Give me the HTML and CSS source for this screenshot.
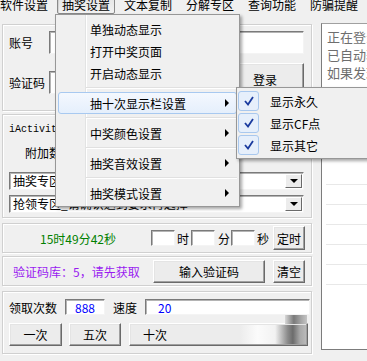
FILE: index.html
```html
<!DOCTYPE html>
<html lang="zh-CN">
<head>
  <meta charset="UTF-8">
  <title>抽奖助手</title>
  <link rel="stylesheet" href="styles.css">
</head>
<body>
  <div class="window">
    <div class="menubar">
      <span class="menu-item">软件设置</span>
      <span class="menu-item active">抽奖设置</span>
      <span class="menu-item">文本复制</span>
      <span class="menu-item">分解专区</span>
      <span class="menu-item">查询功能</span>
      <span class="menu-item">防骗提醒</span>
    </div>

    <div class="main">
      <div class="left">
        <div class="group g-login">
          <div class="row">
            <label class="lbl">账号</label>
            <input type="text" class="field f-account">
          </div>
          <div class="row row-code">
            <label class="lbl">验证码</label>
            <input type="text" class="field f-code">
            <button class="btn btn-login">登录</button>
          </div>
        </div>

        <div class="group g-activity">
          <div class="mono">iActivityId</div>
          <div class="extra">附加数据</div>
          <div class="combo"><span class="combo-text">抽奖专区_请选择活动</span><span class="combo-btn"></span></div>
          <div class="combo combo-2"><span class="combo-text">抢领专区_请确认达到要求再选择</span><span class="combo-btn"></span></div>
        </div>

        <div class="group g-timer">
          <span class="clock">15时49分42秒</span>
          <input type="text" class="field f-time">
          <span class="unit">时</span>
          <input type="text" class="field f-time">
          <span class="unit u-min">分</span>
          <input type="text" class="field f-time">
          <span class="unit u-sec">秒</span>
          <button class="btn btn-small">定时</button>
        </div>

        <div class="group g-captcha">
          <span class="captcha-info">验证码库：5，请先获取</span>
          <button class="btn btn-input">输入验证码</button>
          <button class="btn btn-small">清空</button>
        </div>

        <div class="group g-draw">
          <div class="row">
            <span class="lbl-count">领取次数</span>
            <input type="text" class="field f-count" value="888">
            <span class="lbl-speed">速度</span>
            <input type="text" class="field f-speed" value="20">
          </div>
          <div class="row row-buttons">
            <button class="btn btn-once">一次</button>
            <button class="btn btn-five">五次</button>
            <button class="btn btn-ten">十次</button>
          </div>
        </div>
      </div>

      <div class="log">
        <div class="log-text">正在登录，请稍候...</div>
        <div class="log-text">已自动获取验证码</div>
        <div class="log-text">如果发现异常请重试</div>
        <div class="log-lines">
          <div class="log-line"></div>
          <div class="log-line"></div>
          <div class="log-line"></div>
          <div class="log-line"></div>
          <div class="log-line"></div>
          <div class="log-line"></div>
        </div>
      </div>
    </div>

    <!-- 抽奖设置 dropdown -->
    <div class="popup">
      <div class="popup-item">单独动态显示</div>
      <div class="popup-item">打开中奖页面</div>
      <div class="popup-item">开启动态显示</div>
      <div class="sep"></div>
      <div class="popup-item hot">抽十次显示栏设置<span class="arrow"></span></div>
      <div class="sep"></div>
      <div class="popup-item">中奖颜色设置<span class="arrow"></span></div>
      <div class="sep"></div>
      <div class="popup-item">抽奖音效设置<span class="arrow"></span></div>
      <div class="sep"></div>
      <div class="popup-item">抽奖模式设置<span class="arrow"></span></div>
    </div>

    <div class="submenu">
      <div class="sub-item">
        <span class="check"><svg width="10" height="10" viewBox="0 0 10 10"><polyline points="1,5 4,8.5 9,1" fill="none" stroke="#1a3a9e" stroke-width="1.8"/></svg></span>
        <span class="sub-text">显示永久</span>
      </div>
      <div class="sub-item">
        <span class="check"><svg width="10" height="10" viewBox="0 0 10 10"><polyline points="1,5 4,8.5 9,1" fill="none" stroke="#1a3a9e" stroke-width="1.8"/></svg></span>
        <span class="sub-text">显示CF点</span>
      </div>
      <div class="sub-item">
        <span class="check"><svg width="10" height="10" viewBox="0 0 10 10"><polyline points="1,5 4,8.5 9,1" fill="none" stroke="#1a3a9e" stroke-width="1.8"/></svg></span>
        <span class="sub-text">显示其它</span>
      </div>
    </div>
  </div>
</body>
</html>
```

FILE: styles.css
```css
* {
  box-sizing: border-box;
}
body {
  margin: 0;
  width: 367px;
  height: 361px;
  overflow: hidden;
  background-color: #f0f0f0;
  color: #000;
  font-family: "Noto Sans CJK SC", "Noto Sans", sans-serif;
  font-size: 12px;
}
.window {
  position: relative;
  height: 361px;
  overflow: hidden;
}

/* menu bar */
.menubar {
  display: flex;
  gap: 4px;
  height: 19px;
  margin: -5px 0 0 -5px;
}
.menu-item {
  width: 58px;
  height: 19px;
  line-height: 17px;
  text-align: center;
  white-space: nowrap;
  border: 1px solid transparent;
  border-radius: 2px;
}
.menu-item.active {
  border-color: #8a8a8a;
  background: linear-gradient(#e4e4e4, #f2f2f2);
  box-shadow: inset 1px 1px 1px rgba(0, 0, 0, 0.12);
}

/* layout */
.main {
  display: flex;
  padding-top: 9px;
}
.left {
  width: 310px;
  margin: 1px 0 0 2px;
  display: flex;
  flex-direction: column;
  flex-shrink: 0;
}
.group {
  border: 1px solid #d0d0d0;
  box-shadow: inset 1px 1px #fff, 1px 1px #fff;
}
.row {
  display: flex;
  align-items: center;
}

/* common controls */
.field {
  font: inherit;
  padding: 0;
  margin: 0;
  outline: none;
  background: #fff;
  border: 1px solid;
  border-color: #7a7a7a #f4f4f4 #f4f4f4 #7a7a7a;
  box-shadow: inset 1px 1px #b4b4b4;
}
.btn {
  font: inherit;
  color: #000;
  padding: 0;
  margin: 0;
  background: #ececec;
  border: 1px solid;
  border-color: #fff #6a6a6a #6a6a6a #fff;
  box-shadow: inset -1px -1px #a0a0a0, inset 1px 1px #e4e4e4;
}

/* group: login */
.g-login {
  height: 87px;
  padding: 6px 0 0 6px;
}
.g-login .row {
  height: 23px;
}
.lbl {
  width: 40px;
  line-height: 23px;
}
.f-account {
  width: 255px;
  height: 23px;
}
.row-code {
  margin-top: 8px;
  align-items: flex-end;
}
.g-login .row-code {
  height: 33px;
}
.row-code .lbl {
  margin-bottom: 1px;
}
.f-code {
  width: 175px;
  height: 23px;
  margin: 0 2px 1px 0;
}
.btn-login {
  width: 78px;
  height: 32px;
}

/* group: activity */
.g-activity {
  height: 104px;
  margin-top: 3px;
  padding: 8px 0 0 6px;
}
.mono {
  height: 14px;
  line-height: 14px;
  font-family: "Liberation Mono", monospace;
  font-size: 10px;
}
.extra {
  height: 20px;
  line-height: 20px;
  margin-top: 6px;
  padding-left: 16px;
}
.combo {
  display: flex;
  align-items: center;
  width: 295px;
  height: 18px;
  margin-top: 9px;
  padding: 0 1px 0 3px;
  background: #fff;
  border: 1px solid;
  border-color: #7a7a7a #f4f4f4 #f4f4f4 #7a7a7a;
  box-shadow: inset 1px 1px #b4b4b4;
  white-space: nowrap;
}
.combo-2 {
  margin-top: 5px;
}
.combo-text {
  flex: 1;
  overflow: hidden;
  line-height: 16px;
}
.combo-btn {
  width: 17px;
  height: 14px;
  flex-shrink: 0;
  display: flex;
  align-items: center;
  justify-content: center;
  background: #ececec;
  border: 1px solid;
  border-color: #fff #6a6a6a #6a6a6a #fff;
}
.combo-btn::after {
  content: "";
  border-left: 4px solid transparent;
  border-right: 4px solid transparent;
  border-top: 4px solid #000;
}

/* group: timer */
.g-timer {
  display: flex;
  align-items: center;
  height: 30px;
  margin-top: 5px;
  padding-left: 37px;
}
.clock {
  width: 111px;
  color: #008000;
}
.f-time {
  width: 24px;
  height: 16px;
}
.unit {
  width: 16px;
  padding-left: 2px;
}
.u-min {
  padding-left: 3px;
}
.u-sec {
  width: 18px;
}
.btn-small {
  width: 32px;
  height: 24px;
}

/* group: captcha */
.g-captcha {
  display: flex;
  align-items: center;
  height: 30px;
  margin-top: 3px;
  padding-left: 10px;
}
.captcha-info {
  width: 140px;
  color: #9a1cf0;
  white-space: nowrap;
}
.btn-input {
  width: 112px;
  height: 23px;
  margin-right: 8px;
}
.g-captcha .btn-small {
  height: 23px;
}

/* group: draw */
.g-draw {
  height: 63px;
  margin-top: 5px;
  padding: 7px 0 0 6px;
}
.g-draw .row {
  height: 16px;
}
.lbl-count {
  width: 56px;
}
.f-count {
  width: 40px;
  height: 16px;
  color: #0000ff;
  text-align: center;
}
.lbl-speed {
  width: 40px;
  padding-left: 8px;
}
.f-speed {
  width: 165px;
  height: 16px;
  color: #0000ff;
  padding-left: 12px;
}
.g-draw .row-buttons {
  height: 23px;
  margin-top: 8px;
}
.row-buttons .btn {
  height: 23px;
}
.btn-once {
  width: 53px;
}
.btn-five {
  width: 52px;
  margin-left: 7px;
}
.btn-ten {
  position: relative;
  width: 179px;
  margin-left: 8px;
  padding-left: 13px;
  text-align: left;
  background: linear-gradient(to right, #ececec 0, #ececec 62%, #fbfbfb 72%, #f2f2f2 82%, #8c8c8c 89%, #6c6c6c 92%, #a8a8a8 96%, #bcbcbc 100%);
}
.btn-ten::before {
  content: "";
  position: absolute;
  right: 0;
  top: -9px;
  width: 22px;
  height: 9px;
  background: linear-gradient(to right, #d8d8d8, #7a7a7a 40%, #a8a8a8 75%, #c4c4c4);
}

/* log panel */
.log {
  width: 70px;
  height: 327px;
  margin-left: 9px;
  flex-shrink: 0;
  padding: 4px 0 0 5px;
  background: #fff;
  border: 1px solid #7c7c7c;
  border-top-color: #a0a0a0;
  overflow: hidden;
}
.log-text {
  height: 18px;
  line-height: 18px;
  font-size: 13px;
  color: #6e6e6e;
  white-space: nowrap;
}
.log-lines {
  margin: 83px 0 0 -1px;
}
.log-line {
  height: 20px;
  border-bottom: 1px solid #e8e8e8;
}

/* dropdown menu */
.popup {
  position: absolute;
  left: 55px;
  top: 14px;
  width: 185px;
  height: 193px;
  padding: 3px 0 2px;
  border: 1px solid #979797;
  background-color: #f0f0f0;
  background-image: linear-gradient(to right, transparent 29px, #e2e3e3 29px, #e2e3e3 30px, #fff 30px, #fff 31px, transparent 31px);
  box-shadow: 2px 2px 3px rgba(0, 0, 0, 0.35);
}
.popup-item {
  display: flex;
  align-items: center;
  justify-content: space-between;
  height: 22px;
  margin: 0 2px;
  padding: 0 7px 0 31px;
  border: 1px solid transparent;
  border-radius: 3px;
  white-space: nowrap;
}
.popup-item.hot {
  border-color: #a8c9f0;
  background: linear-gradient(#f4f8fe, #e5effc);
}
.arrow {
  width: 0;
  height: 0;
  border-top: 4px solid transparent;
  border-bottom: 4px solid transparent;
  border-left: 4px solid #000;
}
.sep {
  height: 8px;
  margin: 0 2px 0 30px;
  background: linear-gradient(transparent 3px, #e0e0e0 3px, #e0e0e0 4px, #fff 4px, #fff 5px, transparent 5px);
}

.submenu {
  position: absolute;
  left: 236px;
  top: 87px;
  width: 140px;
  height: 72px;
  padding: 2px 0;
  border: 1px solid #979797;
  background: #f0f0f0;
  box-shadow: 2px 2px 3px rgba(0, 0, 0, 0.35);
}
.sub-item {
  display: flex;
  align-items: center;
  height: 22px;
  padding-left: 1px;
}
.check {
  display: flex;
  align-items: center;
  justify-content: center;
  width: 21px;
  height: 20px;
  border: 1px solid #a9c8ee;
  border-radius: 3px;
  background: #e6effb;
}
.sub-text {
  margin-left: 11px;
  white-space: nowrap;
}
```
